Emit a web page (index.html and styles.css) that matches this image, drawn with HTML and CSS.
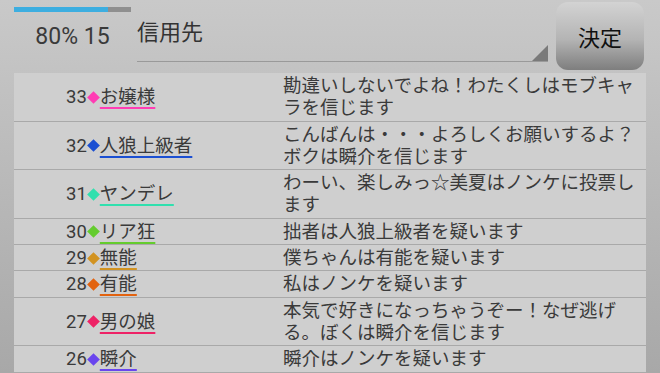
FILE: index.html
```html
<!DOCTYPE html>
<html lang="ja">
<head>
    <meta charset="UTF-8">
    <meta name="viewport" content="width=device-width, initial-scale=1.0">
    <title>投票</title>
    <link rel="stylesheet" href="styles.css">
</head>
<body>
    <header class="top">
        <div class="status">
            <div class="progress"><div class="progress-fill" style="width: 80%"></div></div>
            <div class="count">80% 15</div>
        </div>
        <div class="spinner">信用先<span class="spinner-arrow"></span></div>
        <button class="decide" type="button">決定</button>
    </header>

    <ul class="log">
        <li class="row">
            <div class="who"><span class="no">33</span><span class="mark c-ojou"></span><span class="name c-ojou">お嬢様</span></div>
            <div class="msg">勘違いしないでよね！わたくしはモブキャラを信じます</div>
        </li>
        <li class="row">
            <div class="who"><span class="no">32</span><span class="mark c-jinrou"></span><span class="name c-jinrou">人狼上級者</span></div>
            <div class="msg">こんばんは・・・よろしくお願いするよ？ボクは瞬介を信じます</div>
        </li>
        <li class="row">
            <div class="who"><span class="no">31</span><span class="mark c-yandere"></span><span class="name c-yandere">ヤンデレ</span></div>
            <div class="msg">わーい、楽しみっ☆美夏はノンケに投票します</div>
        </li>
        <li class="row">
            <div class="who"><span class="no">30</span><span class="mark c-riajuu"></span><span class="name c-riajuu">リア狂</span></div>
            <div class="msg">拙者は人狼上級者を疑います</div>
        </li>
        <li class="row">
            <div class="who"><span class="no">29</span><span class="mark c-munou"></span><span class="name c-munou">無能</span></div>
            <div class="msg">僕ちゃんは有能を疑います</div>
        </li>
        <li class="row">
            <div class="who"><span class="no">28</span><span class="mark c-yuunou"></span><span class="name c-yuunou">有能</span></div>
            <div class="msg">私はノンケを疑います</div>
        </li>
        <li class="row">
            <div class="who"><span class="no">27</span><span class="mark c-otoko"></span><span class="name c-otoko">男の娘</span></div>
            <div class="msg">本気で好きになっちゃうぞー！なぜ逃げる。ぼくは瞬介を信じます</div>
        </li>
        <li class="row">
            <div class="who"><span class="no">26</span><span class="mark c-shun"></span><span class="name c-shun">瞬介</span></div>
            <div class="msg">瞬介はノンケを疑います</div>
        </li>
    </ul>
</body>
</html>
```

FILE: styles.css
```css
/* General */
body {
    margin: 0;
    width: 660px;
    height: 373px;
    overflow: hidden;
    background: linear-gradient(#c9c9c9, #a8a8a8);
    font-family: Roboto, "Noto Sans CJK JP", sans-serif;
    color: #3a3a3a;
}

/* Top bar */
.top {
    display: flex;
    height: 73px;
    padding: 0 16px 0 14px;
    box-sizing: border-box;
}

.status {
    width: 117px;
    display: flex;
    flex-direction: column;
    align-items: center;
}

.progress {
    align-self: stretch;
    height: 5px;
    margin-top: 7px;
    background-color: #8f8f8f;
}

.progress-fill {
    height: 100%;
    background-color: #3daee0;
}

.count {
    margin-top: 11px;
    font-size: 23px;
    line-height: 27px;
    color: #3a3a3a;
}

/* Spinner */
.spinner {
    position: relative;
    flex: 1;
    height: 62px;
    margin: 0 8px 0 6px;
    padding-top: 20px;
    box-sizing: border-box;
    border-bottom: 1px solid #9a9a9a;
    font-size: 22px;
    line-height: 26px;
    color: #333;
}

.spinner-arrow {
    position: absolute;
    right: 0;
    bottom: 0;
    width: 0;
    height: 0;
    border-left: 16px solid transparent;
    border-bottom: 16px solid #7a7a7a;
}

/* Button */
.decide {
    width: 88px;
    height: 68px;
    margin-top: 2px;
    padding: 0;
    border: none;
    border-radius: 12px;
    background: linear-gradient(#d3d3d3, #b4b4b4 55%, #7e7e7e);
    font-family: "Noto Sans CJK JP", sans-serif;
    font-size: 22px;
    color: #111;
}

/* Log list */
.log {
    list-style: none;
    margin: 0 14px;
    padding: 0;
    background-color: #cfcfcf;
}

.row {
    display: flex;
    padding: 2px 0 1px;
    border-bottom: 1px solid #a9a9a9;
    font-size: 18.5px;
    line-height: 22.3px;
}

.who {
    width: 269px;
    flex-shrink: 0;
    padding-left: 52px;
    box-sizing: border-box;
    display: flex;
    align-items: center;
}

.mark {
    width: 9px;
    height: 9px;
    margin: 0 2px;
    transform: rotate(45deg);
    background-color: currentColor;
}

.name {
    text-decoration: underline 2px;
    text-decoration-skip-ink: none;
    text-underline-offset: 3.5px;
}

.msg {
    flex: 1;
    padding-right: 8px;
}

/* Character colours */
.c-ojou { color: #ff3db4; text-decoration-color: #ff3db4; }
.c-jinrou { color: #1b4fd2; text-decoration-color: #1b4fd2; }
.c-yandere { color: #30e0ae; text-decoration-color: #30e0ae; }
.c-riajuu { color: #64cc2e; text-decoration-color: #64cc2e; }
.c-munou { color: #d29321; text-decoration-color: #d29321; }
.c-yuunou { color: #e2620f; text-decoration-color: #e2620f; }
.c-otoko { color: #ee2266; text-decoration-color: #ee2266; }
.c-shun { color: #6a45ee; text-decoration-color: #6a45ee; }

.name.c-ojou, .name.c-jinrou, .name.c-yandere, .name.c-riajuu,
.name.c-munou, .name.c-yuunou, .name.c-otoko, .name.c-shun {
    color: #3a3a3a;
}
```
